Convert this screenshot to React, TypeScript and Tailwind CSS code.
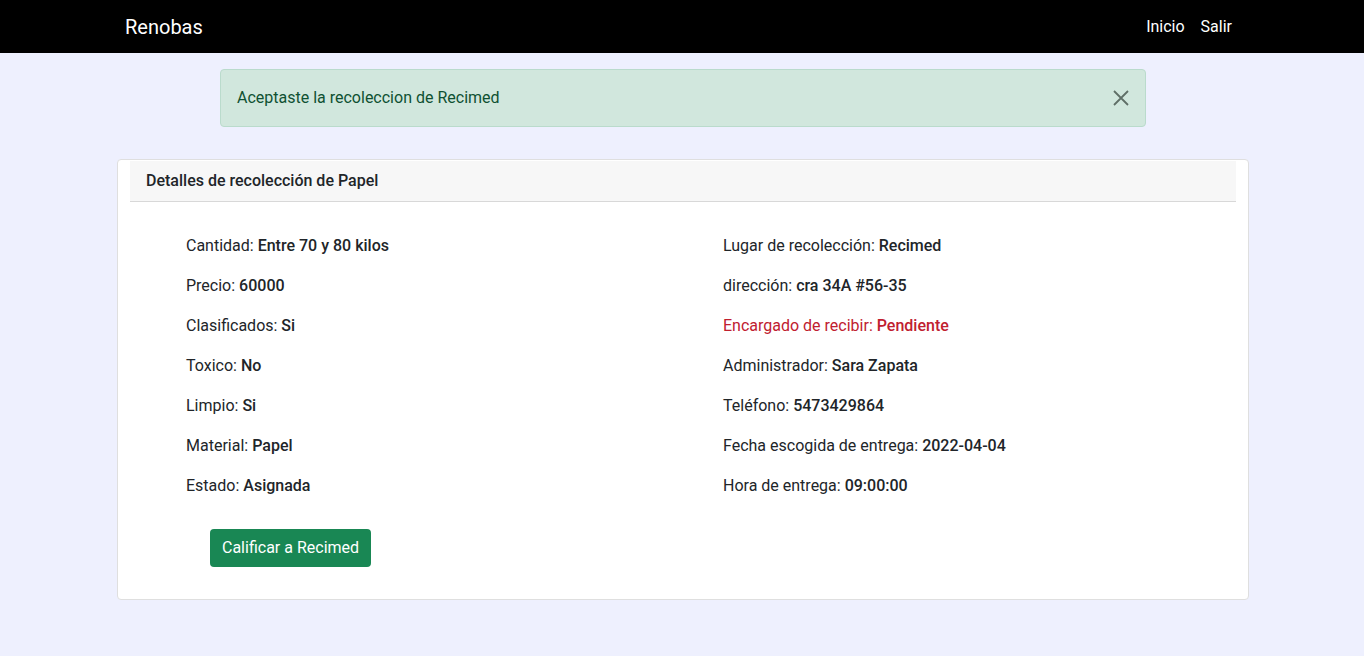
const left = [
  { label: "Cantidad", value: "Entre 70 y 80 kilos" },
  { label: "Precio", value: "60000" },
  { label: "Clasificados", value: "Si" },
  { label: "Toxico", value: "No" },
  { label: "Limpio", value: "Si" },
  { label: "Material", value: "Papel" },
  { label: "Estado", value: "Asignada" },
];

const right = [
  { label: "Lugar de recolección", value: "Recimed" },
  { label: "dirección", value: "cra 34A #56-35" },
  { label: "Encargado de recibir", value: "Pendiente", danger: true },
  { label: "Administrador", value: "Sara Zapata" },
  { label: "Teléfono", value: "5473429864" },
  { label: "Fecha escogida de entrega", value: "2022-04-04" },
  { label: "Hora de entrega", value: "09:00:00" },
];

type Item = { label: string; value: string; danger?: boolean };

function Detail({ item }: { item: Item }) {
  return (
    <p className={`mb-4 leading-6 ${item.danger ? "text-[#c0202f]" : "text-[#212529]"}`}>
      {item.label}: <span className="font-medium">{item.value}</span>
    </p>
  );
}

export default function App() {
  return (
    <div
      className="min-h-screen bg-[#eef0fe] text-base text-[#212529]"
      style={{ fontFamily: "Roboto, 'Noto Sans', sans-serif" }}
    >
      {/* Navbar */}
      <nav className="h-[53px] bg-black">
        <div className="mx-auto flex h-full w-[1140px] items-center justify-between px-3">
          <span className="pl-px text-xl text-white">Renobas</span>
          <div className="flex items-center">
            <a className="px-2 text-white">Inicio</a>
            <a className="px-2 text-white">Salir</a>
          </div>
        </div>
      </nav>

      {/* Alert */}
      <div className="pt-4">
        <div className="mx-auto flex h-[58px] w-[926px] translate-x-px items-center justify-between rounded border border-[#badbcc] bg-[#d1e7dd] pl-4 pr-4 text-[#0f5132]">
          <span>Aceptaste la recoleccion de Recimed</span>
          <svg width="16" height="16" viewBox="0 0 16 16" className="text-[#5f6f67]">
            <path d="M1 1L15 15M15 1L1 15" stroke="currentColor" strokeWidth="1.8" />
          </svg>
        </div>
      </div>

      {/* Card */}
      <div className="pt-8">
        <div className="mx-auto w-[1132px] translate-x-px rounded border border-[#dfdfdf] bg-white px-3 pt-px pb-8">
          <div className="flex h-[41px] items-center border-b border-[#d8d8d8] bg-[#f7f7f7] px-4 font-medium">
            Detalles de recolección de Papel
          </div>
          <div className="grid grid-cols-[593px_1fr] pt-8">
            <div className="pl-14">
              {left.map((it) => (
                <Detail key={it.label} item={it} />
              ))}
            </div>
            <div>
              {right.map((it) => (
                <Detail key={it.label} item={it} />
              ))}
            </div>
          </div>
          <div className="pl-20 pt-[15px]">
            <button className="h-[38px] rounded bg-[#198754] px-3 text-white">
              Calificar a Recimed
            </button>
          </div>
        </div>
      </div>
    </div>
  );
}
